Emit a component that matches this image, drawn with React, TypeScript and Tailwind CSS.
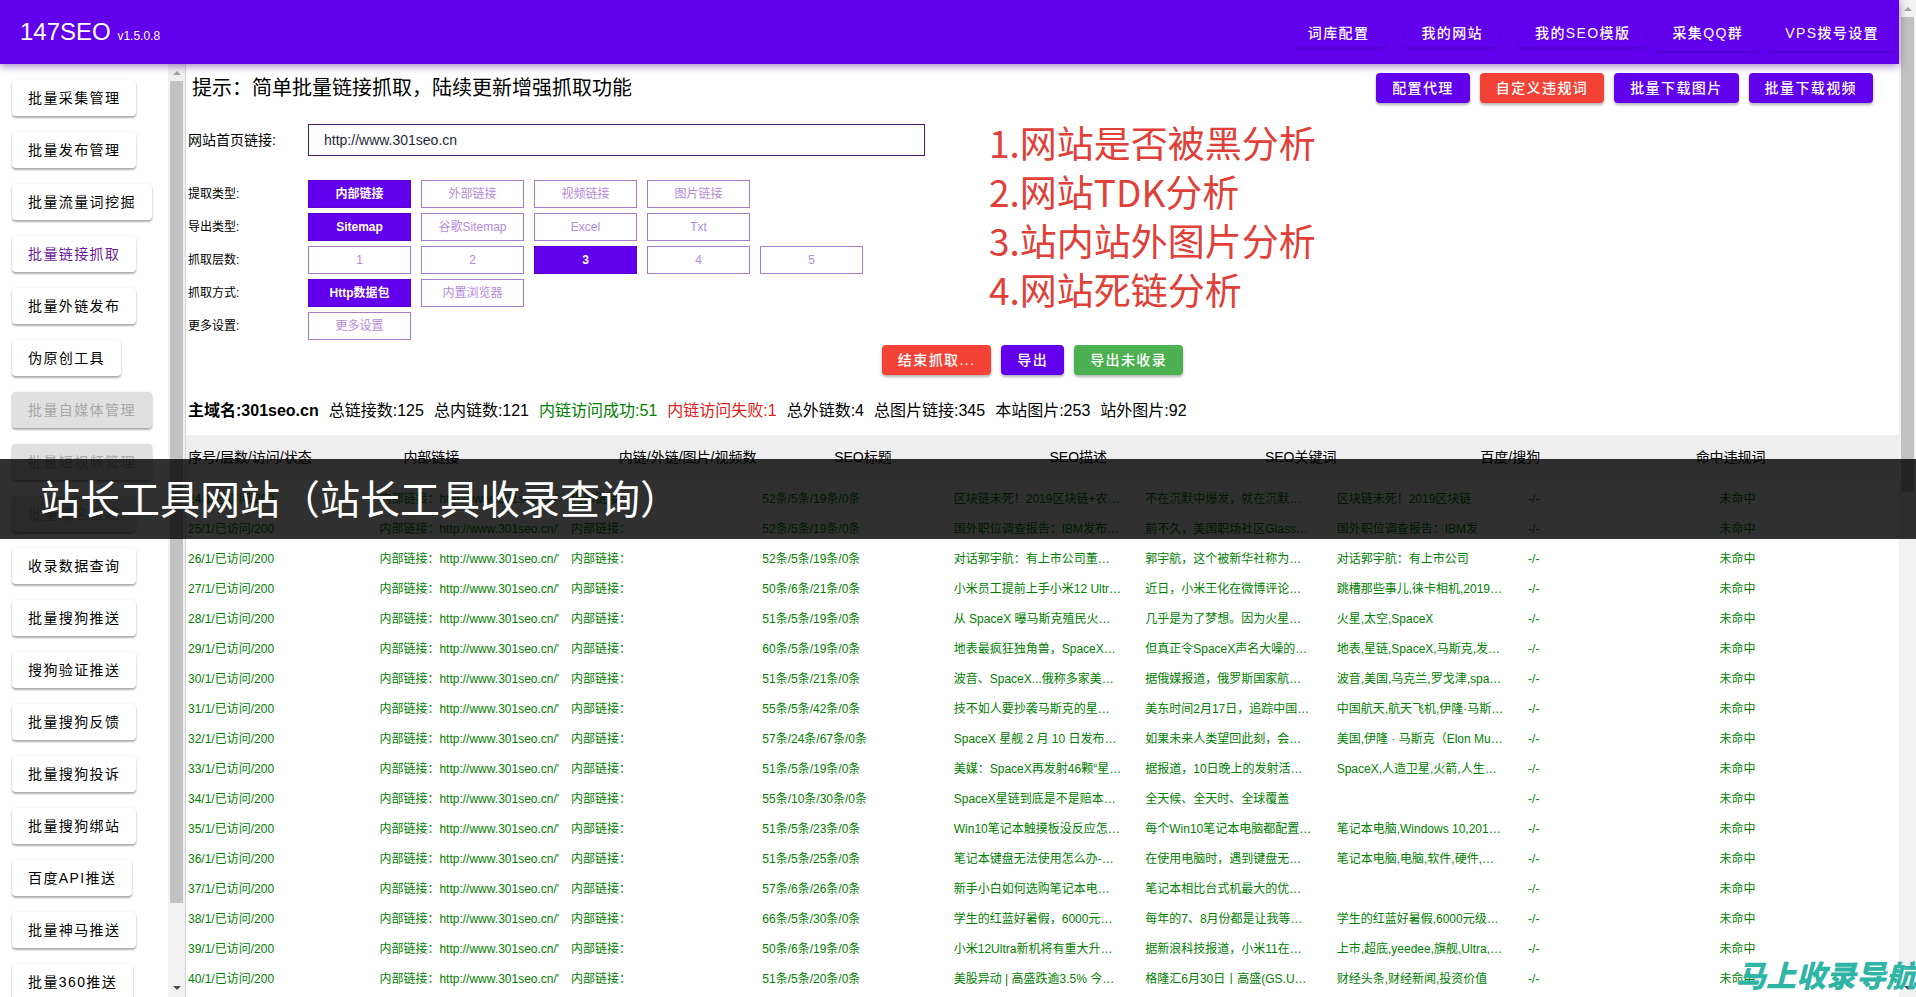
import { useState } from 'react';

type Tone = 'purple' | 'red' | 'green';

const navLinks = ['词库配置', '我的网站', '我的SEO模版'];
const navExtras = ['采集QQ群', 'VPS拨号设置'];

const menuItems = [
  { label: '批量采集管理' },
  { label: '批量发布管理' },
  { label: '批量流量词挖掘' },
  { label: '批量链接抓取', active: true },
  { label: '批量外链发布' },
  { label: '伪原创工具' },
  { label: '批量自媒体管理', disabled: true },
  { label: '批量短视频管理', disabled: true },
  { label: '批量域名管理', disabled: true },
  { label: '收录数据查询' },
  { label: '批量搜狗推送' },
  { label: '搜狗验证推送' },
  { label: '批量搜狗反馈' },
  { label: '批量搜狗投诉' },
  { label: '批量搜狗绑站' },
  { label: '百度API推送' },
  { label: '批量神马推送' },
  { label: '批量360推送' },
];

const optionGroups = [
  { label: '提取类型:', options: ['内部链接', '外部链接', '视频链接', '图片链接'], selected: '内部链接' },
  { label: '导出类型:', options: ['Sitemap', '谷歌Sitemap', 'Excel', 'Txt'], selected: 'Sitemap' },
  { label: '抓取层数:', options: ['1', '2', '3', '4', '5'], selected: '3' },
  { label: '抓取方式:', options: ['Http数据包', '内置浏览器'], selected: 'Http数据包' },
  { label: '更多设置:', options: ['更多设置'], selected: '' },
];

const features = ['1.网站是否被黑分析', '2.网站TDK分析', '3.站内站外图片分析', '4.网站死链分析'];

const columns = [
  '序号/层数/访问/状态',
  '内部链接',
  '内链/外链/图片/视频数',
  'SEO标题',
  'SEO描述',
  'SEO关键词',
  '百度/搜狗',
  '命中违规词',
];

// [no, counts, title, description, keywords]
const rows: [number, string, string, string, string][] = [
  [24, '52条/5条/19条/0条', '区块链未死！2019区块链+农…', '不在沉默中爆发，就在沉默…', '区块链未死！2019区块链'],
  [25, '52条/5条/19条/0条', '国外职位调查报告：IBM发布…', '前不久，美国职场社区Glass…', '国外职位调查报告：IBM发'],
  [26, '52条/5条/19条/0条', '对话郭宇航：有上市公司董…', '郭宇航，这个被新华社称为…', '对话郭宇航：有上市公司'],
  [27, '50条/6条/21条/0条', '小米员工提前上手小米12 Ultr…', '近日，小米王化在微博评论…', '跳槽那些事儿,徕卡相机,2019…'],
  [28, '51条/5条/19条/0条', '从 SpaceX 曝马斯克殖民火…', '几乎是为了梦想。因为火星…', '火星,太空,SpaceX'],
  [29, '60条/5条/19条/0条', '地表最疯狂独角兽，SpaceX…', '但真正令SpaceX声名大噪的…', '地表,星链,SpaceX,马斯克,发…'],
  [30, '51条/5条/21条/0条', '波音、SpaceX...俄称多家美…', '据俄媒报道，俄罗斯国家航…', '波音,美国,乌克兰,罗戈津,spa…'],
  [31, '55条/5条/42条/0条', '技不如人要抄袭马斯克的星…', '美东时间2月17日，追踪中国…', '中国航天,航天飞机,伊隆·马斯…'],
  [32, '57条/24条/67条/0条', 'SpaceX 星舰 2 月 10 日发布…', '如果未来人类望回此刻，会…', '美国,伊隆 · 马斯克（Elon Mu…'],
  [33, '51条/5条/19条/0条', '美媒：SpaceX再发射46颗“星…', '据报道，10日晚上的发射活…', 'SpaceX,人造卫星,火箭,人生…'],
  [34, '55条/10条/30条/0条', 'SpaceX星链到底是不是赔本…', '全天候、全天时、全球覆盖', ''],
  [35, '51条/5条/23条/0条', 'Win10笔记本触摸板没反应怎…', '每个Win10笔记本电脑都配置…', '笔记本电脑,Windows 10,201…'],
  [36, '51条/5条/25条/0条', '笔记本键盘无法使用怎么办-…', '在使用电脑时，遇到键盘无…', '笔记本电脑,电脑,软件,硬件,…'],
  [37, '57条/6条/26条/0条', '新手小白如何选购笔记本电…', '笔记本相比台式机最大的优…', ''],
  [38, '66条/5条/30条/0条', '学生的红蓝好暑假，6000元…', '每年的7、8月份都是让我等…', '学生的红蓝好暑假,6000元级…'],
  [39, '50条/6条/19条/0条', '小米12Ultra新机将有重大升…', '据新浪科技报道，小米11在…', '上市,超底,yeedee,旗舰,Ultra,…'],
  [40, '51条/5条/20条/0条', '美股异动 | 高盛跌逾3.5% 今…', '格隆汇6月30日丨高盛(GS.U…', '财经头条,财经新闻,投资价值'],
];

const tones: Record<Tone, string> = {
  purple: 'bg-[#6200ee]',
  red: 'bg-[#f44336]',
  green: 'bg-[#4caf50]',
};

const ActionButton = ({ tone, children }: { tone: Tone; children: string }) => (
  <button
    type="button"
    className={`h-[30px] rounded px-4 text-sm font-medium tracking-widest whitespace-nowrap text-white shadow-[0_2px_3px_rgba(0,0,0,0.3)] ${tones[tone]}`}
  >
    {children}
  </button>
);

const Arrow = ({ down = false, className = '' }: { down?: boolean; className?: string }) => (
  <svg viewBox="0 0 8 4" className={`h-1 w-2 shrink-0 ${className}`} aria-hidden="true">
    <path d={down ? 'M0 0h8L4 4z' : 'M0 4h8L4 0z'} fill="currentColor" />
  </svg>
);

const Header = () => (
  <header className="relative z-10 flex h-16 shrink-0 items-center justify-between bg-[#6200ee] pr-1 pl-5 text-white shadow-[0_2px_8px_rgba(60,0,140,0.5)]">
    <h1 className="text-2xl whitespace-nowrap">
      147SEO <small className="text-xs font-medium">v1.5.0.8</small>
    </h1>
    <nav className="flex items-center gap-2.5 pt-0.5">
      <div className="flex gap-5">
        {navLinks.map((label) => (
          <a key={label} href="#" className="rounded px-4 py-1 text-sm font-medium tracking-widest whitespace-nowrap shadow-[0_2px_3px_rgba(40,0,110,0.25)]">
            {label}
          </a>
        ))}
      </div>
      {navExtras.map((label) => (
        <a key={label} href="#" className="rounded px-4 py-2 text-sm font-medium tracking-widest whitespace-nowrap shadow-[0_2px_3px_rgba(40,0,110,0.25)]">
          {label}
        </a>
      ))}
    </nav>
  </header>
);

const Sidebar = () => (
  <aside className="flex w-[186px] shrink-0 border-r border-gray-300">
    <nav className="flex flex-1 flex-col items-start gap-4 overflow-hidden pt-4 pl-3">
      {menuItems.map(({ label, active, disabled }) => (
        <button
          key={label}
          type="button"
          disabled={disabled}
          className={`h-9 shrink-0 rounded px-4 text-sm tracking-widest whitespace-nowrap shadow-[0_2px_2px_rgba(0,0,0,0.3),0_0_2px_rgba(0,0,0,0.1)] ${
            disabled ? 'bg-[#e0e0e0] text-[#a6a6a6]' : active ? 'bg-white text-[#6a1b9a]' : 'bg-white text-black'
          }`}
        >
          {label}
        </button>
      ))}
    </nav>
    {/* Sidebar scrollbar */}
    <div className="flex w-[17px] flex-col items-center bg-[#f1f1f1] py-[7px]">
      <Arrow className="text-[#a3a3a3]" />
      <div className="mt-1.5 h-[822px] w-[13px] bg-[#c1c1c1]" />
      <Arrow down className="mt-auto text-[#505050]" />
    </div>
  </aside>
);

const OptionRow = ({ label, options, selected }: { label: string; options: string[]; selected: string }) => {
  const [value, setValue] = useState(selected);

  return (
    <div role="group" aria-label={label} className="flex items-center">
      <span className="w-[120px] shrink-0 text-xs">{label}</span>
      <div className="flex gap-2.5">
        {options.map((option) => (
          <button
            key={option}
            type="button"
            aria-pressed={option === value}
            onClick={() => setValue(option)}
            className={`h-7 w-[103px] border text-xs ${
              option === value
                ? 'border-[#5a00d0] bg-[#6200ee] font-bold text-white'
                : 'border-[#a57cc8] bg-white text-[#b58ad6]'
            }`}
          >
            {option}
          </button>
        ))}
      </div>
    </div>
  );
};

const ResultTable = () => (
  <div className="overflow-hidden">
    <table className="block w-full">
      <thead className="block bg-[#eee]">
        <tr className="-mr-3 grid h-11 grid-cols-8 items-center pl-0.5">
          {columns.map((column) => (
            <th key={column} scope="col" className="text-left text-sm font-normal whitespace-nowrap">
              {column}
            </th>
          ))}
        </tr>
      </thead>
      <tbody className="block pt-[5px] text-xs text-[#008000]">
        {rows.map(([no, counts, title, description, keywords]) => (
          <tr key={no} className="-mr-3 grid h-[30px] grid-cols-9 items-center pl-0.5 whitespace-nowrap">
            <td>{no}/1/已访问/200</td>
            <td>内部链接：http://www.301seo.cn/'</td>
            <td>内部链接：</td>
            <td>{counts}</td>
            <td>{title}</td>
            <td>{description}</td>
            <td>{keywords}</td>
            <td>-/-</td>
            <td>未命中</td>
          </tr>
        ))}
      </tbody>
    </table>
  </div>
);

export default function App() {
  const [url, setUrl] = useState('http://www.301seo.cn');

  return (
    <div className="relative flex h-screen overflow-hidden bg-white font-['Liberation_Sans','Noto_Sans_CJK_SC',sans-serif] text-black">
      <div className="flex min-w-0 flex-1 flex-col">
        <Header />
        <div className="flex min-h-0 flex-1">
          <Sidebar />
          <main className="min-w-0 flex-1 overflow-hidden">
            <div className="flex h-12 items-center justify-between pr-[26px] pl-1.5">
              <h2 className="text-xl">提示：简单批量链接抓取，陆续更新增强抓取功能</h2>
              <div className="flex gap-2.5">
                <ActionButton tone="purple">配置代理</ActionButton>
                <ActionButton tone="red">自定义违规词</ActionButton>
                <ActionButton tone="purple">批量下载图片</ActionButton>
                <ActionButton tone="purple">批量下载视频</ActionButton>
              </div>
            </div>

            <div className="flex gap-16 pl-0.5">
              <form className="w-[737px] pt-3" onSubmit={(e) => e.preventDefault()}>
                <div className="flex items-center">
                  <label htmlFor="site-url" className="w-[120px] shrink-0 text-sm">
                    网站首页链接:
                  </label>
                  <input
                    id="site-url"
                    type="text"
                    value={url}
                    onChange={(e) => setUrl(e.target.value)}
                    className="h-8 min-w-0 flex-1 border border-[#4a1a6b] px-[15px] text-sm text-gray-800 outline-none"
                  />
                </div>
                <div className="mt-6 flex flex-col gap-[5px]">
                  {optionGroups.map((group) => (
                    <OptionRow key={group.label} {...group} />
                  ))}
                </div>
              </form>
              <ul className="pt-1.5 font-['Noto_Sans_CJK_SC',sans-serif] text-[37px] leading-[49px] whitespace-nowrap text-[#e04038]">
                {features.map((feature) => (
                  <li key={feature}>{feature}</li>
                ))}
              </ul>
            </div>

            <div className="mt-[5px] flex justify-center gap-2.5 pr-5">
              <ActionButton tone="red">结束抓取...</ActionButton>
              <ActionButton tone="purple">导出</ActionButton>
              <ActionButton tone="green">导出未收录</ActionButton>
            </div>

            <div className="flex h-[60px] items-center gap-2.5 pt-3 pl-0.5 whitespace-nowrap">
              <strong>主域名:301seo.cn</strong>
              <span>总链接数:125</span>
              <span>总内链数:121</span>
              <span className="text-[#008000]">内链访问成功:51</span>
              <span className="text-[#e02020]">内链访问失败:1</span>
              <span>总外链数:4</span>
              <span>总图片链接:345</span>
              <span>本站图片:253</span>
              <span>站外图片:92</span>
            </div>

            <ResultTable />
          </main>
        </div>
      </div>

      {/* Page scrollbar */}
      <div className="flex w-[17px] shrink-0 flex-col items-center bg-[#f1f1f1] py-[7px]">
        <Arrow className="text-[#a3a3a3]" />
        <div className="mt-1.5 h-[475px] w-[13px] bg-[#c1c1c1]" />
        <Arrow down className="mt-auto text-[#505050]" />
      </div>

      {/* Caption banner */}
      <div className="absolute inset-x-0 top-[46%] z-20 flex h-20 items-center bg-black/81 pt-0.5 pl-10 text-[40px] text-white">
        站长工具网站（站长工具收录查询）
      </div>

      {/* Watermark */}
      <div className="absolute right-0 bottom-0.5 z-20 w-[180px] overflow-hidden text-3xl leading-9 font-black whitespace-nowrap text-[#2fb5a5] italic">
        马上收录导航
      </div>
    </div>
  );
}
